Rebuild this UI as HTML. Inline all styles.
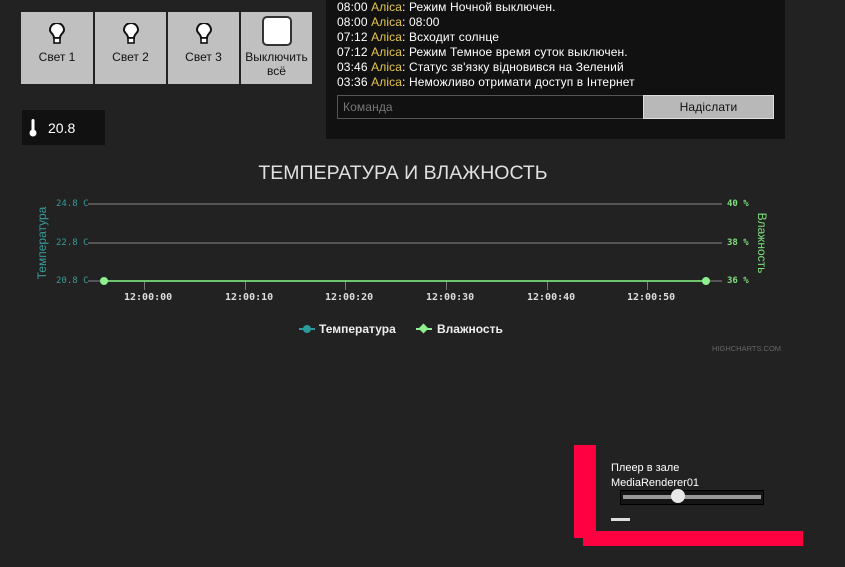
<!DOCTYPE html>
<html><head><meta charset="utf-8"><style>
body{margin:0;width:845px;height:567px;background:#222;overflow:hidden;position:relative;font-family:"Liberation Sans",sans-serif;}
.a{position:absolute}
.btn{position:absolute;top:12px;height:72px;background:#c0c0c0;font-size:12px;color:#111;text-align:center}
.btn svg{position:absolute;left:50%;margin-left:-8px;top:11px}
.btn span{position:absolute;left:0;right:0;top:38px;line-height:14px}
.log div{position:absolute;left:11px;font-size:12px;color:#fff;white-space:nowrap;letter-spacing:0.12px}
.log b{font-weight:normal;color:#e6c64a}
.yl{position:absolute;font-family:"DejaVu Sans Mono",monospace;font-size:9px;color:#3a9a9a}
.yr{position:absolute;font-family:"DejaVu Sans Mono",monospace;font-size:9px;color:#7de07d;font-weight:bold}
.xl{position:absolute;font-family:"DejaVu Sans Mono",monospace;font-size:10px;color:#ddd;font-weight:bold}
.tk{position:absolute;width:1px;height:8px;background:#777;top:282px}
</style></head><body>
<div class="btn" style="left:21px;width:72px"><svg width="16" height="22" viewBox="0 0 16 22"><path d="M5 15 C5 11 1 10 1 7 A7 7 0 0 1 15 7 C15 10 11 11 11 15 Z" fill="#fff" stroke="#111" stroke-width="2"/><rect x="5" y="15" width="6" height="5" fill="#fff" stroke="#111" stroke-width="1.6"/></svg><span>Свет 1</span></div>
<div class="btn" style="left:95px;width:71px"><svg width="16" height="22" viewBox="0 0 16 22"><path d="M5 15 C5 11 1 10 1 7 A7 7 0 0 1 15 7 C15 10 11 11 11 15 Z" fill="#fff" stroke="#111" stroke-width="2"/><rect x="5" y="15" width="6" height="5" fill="#fff" stroke="#111" stroke-width="1.6"/></svg><span>Свет 2</span></div>
<div class="btn" style="left:168px;width:71px"><svg width="16" height="22" viewBox="0 0 16 22"><path d="M5 15 C5 11 1 10 1 7 A7 7 0 0 1 15 7 C15 10 11 11 11 15 Z" fill="#fff" stroke="#111" stroke-width="2"/><rect x="5" y="15" width="6" height="5" fill="#fff" stroke="#111" stroke-width="1.6"/></svg><span>Свет 3</span></div>
<div class="btn" style="left:241px;width:71px"><div class="a" style="left:21px;top:4px;width:26px;height:26px;border:2px solid #333;border-radius:5px;background:#fff"></div><span style="top:38px">Выключить<br>всё</span></div>

<div class="a" style="left:22px;top:110px;width:83px;height:35px;background:#111"><svg class="a" style="left:7px;top:8px" width="8" height="20" viewBox="0 0 8 20"><rect x="2.5" y="1" width="3" height="12" rx="1.5" fill="#fff"/><circle cx="4" cy="15" r="3.5" fill="#fff"/></svg><span class="a" style="left:26px;top:10px;font-size:14px;color:#fff">20.8</span></div>

<div class="a log" style="left:326px;top:0;width:459px;height:139px;background:#111">
<div style="top:0">08:00 <b>Аліса</b>: Режим Ночной выключен.</div>
<div style="top:15px">08:00 <b>Аліса</b>: 08:00</div>
<div style="top:30px">07:12 <b>Аліса</b>: Всходит солнце</div>
<div style="top:45px">07:12 <b>Аліса</b>: Режим Темное время суток выключен.</div>
<div style="top:60px">03:46 <b>Аліса</b>: Статус зв'язку відновився на Зелений</div>
<div style="top:75px">03:36 <b>Аліса</b>: Неможливо отримати доступ в Інтернет</div>
<div style="left:11px;top:95px;height:22px;border:1px solid #555;background:#111;color:#777;font-size:12px;line-height:22px;padding-left:5px;width:300px">Команда</div>
<div style="left:317px;top:95px;width:129px;height:22px;border:1px solid #ddd;background:#b8b8b8;color:#111;font-size:12px;line-height:22px;text-align:center">Надіслати</div>
</div>

<div class="a" style="left:0;width:806px;top:162px;text-align:center;font-size:19.5px;color:#e0e0e0">ТЕМПЕРАТУРА И ВЛАЖНОСТЬ</div>
<div class="a" style="left:88px;top:203px;width:634px;height:2px;background:#555"></div>
<div class="a" style="left:88px;top:242px;width:634px;height:2px;background:#555"></div>
<div class="a" style="left:88px;top:280px;width:634px;height:2px;background:#555"></div>
<div class="a" style="left:104px;top:280px;width:602px;height:2px;background:#6ec56e"></div>
<div class="a" style="left:100px;top:277px;width:8px;height:8px;border-radius:50%;background:#8ef08e"></div>
<div class="a" style="left:702px;top:277px;width:8px;height:8px;border-radius:50%;background:#8ef08e"></div>
<div class="tk" style="left:144px"></div><div class="tk" style="left:245px"></div><div class="tk" style="left:345px"></div><div class="tk" style="left:446px"></div><div class="tk" style="left:547px"></div><div class="tk" style="left:647px"></div>
<div class="xl" style="left:124px;top:292px">12:00:00</div><div class="xl" style="left:225px;top:292px">12:00:10</div><div class="xl" style="left:325px;top:292px">12:00:20</div><div class="xl" style="left:426px;top:292px">12:00:30</div><div class="xl" style="left:527px;top:292px">12:00:40</div><div class="xl" style="left:627px;top:292px">12:00:50</div>
<div class="yl" style="left:56px;top:199px">24.8 C</div><div class="yl" style="left:56px;top:238px">22.8 C</div><div class="yl" style="left:56px;top:276px">20.8 C</div>
<div class="yr" style="left:727px;top:199px">40 %</div><div class="yr" style="left:727px;top:238px">38 %</div><div class="yr" style="left:727px;top:276px">36 %</div>
<div class="a" style="left:42px;top:243px;transform:translate(-50%,-50%) rotate(-90deg);font-size:12px;color:#3a9a9a;white-space:nowrap">Температура</div>
<div class="a" style="left:762px;top:243px;transform:translate(-50%,-50%) rotate(90deg);font-size:12px;color:#7de07d;white-space:nowrap">Влажность</div>
<div class="a" style="left:299px;top:328px;width:16px;height:2px;background:#2a9a9a"></div><div class="a" style="left:303px;top:325px;width:8px;height:8px;border-radius:50%;background:#2a9a9a"></div>
<div class="a" style="left:319px;top:322px;font-size:12px;font-weight:bold;color:#eee">Температура</div>
<div class="a" style="left:416px;top:328px;width:16px;height:2px;background:#8ef08e"></div><div class="a" style="left:420px;top:325px;width:7px;height:7px;transform:rotate(45deg);background:#8ef08e"></div>
<div class="a" style="left:437px;top:322px;font-size:12px;font-weight:bold;color:#eee">Влажность</div>
<div class="a" style="left:712px;top:344px;font-size:7.5px;color:#666">HIGHCHARTS.COM</div>

<div class="a" style="left:574px;top:445px;width:22px;height:93px;background:#ff0040"></div>
<div class="a" style="left:583px;top:531px;width:220px;height:15px;background:#ff0040"></div>
<div class="a" style="left:611px;top:461px;font-size:11px;color:#fff;line-height:15px">Плеер в зале<br>MediaRenderer01</div>
<div class="a" style="left:620px;top:490px;width:142px;height:13px;border:1px solid #000;background:#151515"></div>
<div class="a" style="left:623px;top:495px;width:138px;height:4px;background:#999"></div>
<div class="a" style="left:671px;top:489px;width:14px;height:14px;border-radius:50%;background:#e8e8e8"></div>
<div class="a" style="left:611px;top:518px;width:19px;height:3px;background:#ddd"></div>
</body></html>
